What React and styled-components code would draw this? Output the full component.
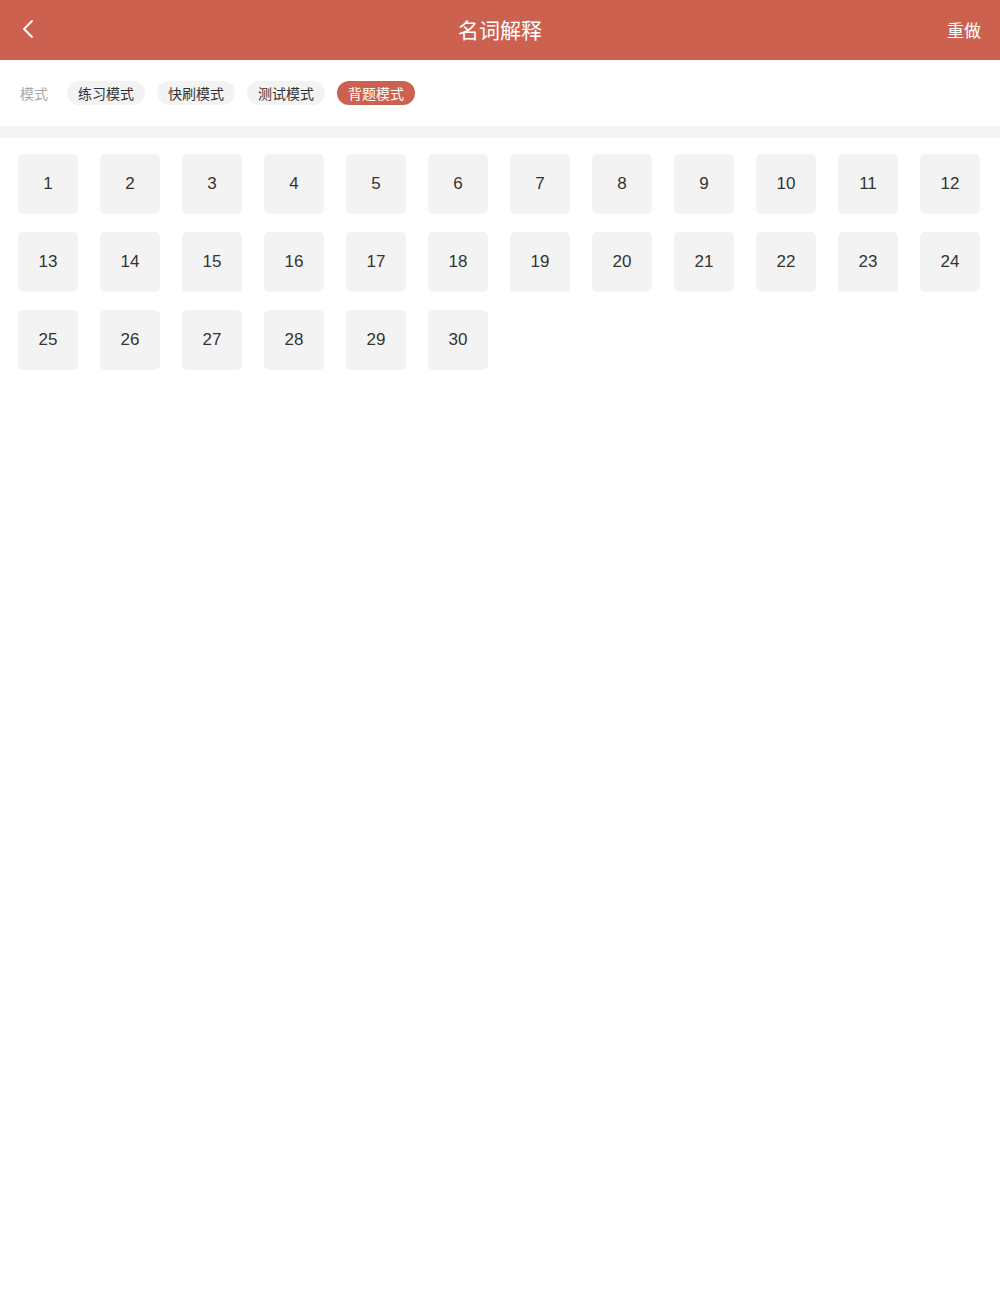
import React from "react";
import styled, { createGlobalStyle } from "styled-components";

const GlobalStyle = createGlobalStyle`
  html, body {
    margin: 0;
    padding: 0;
    background: #ffffff;
    font-family: "Noto Sans CJK SC", "Noto Sans", sans-serif;
  }
`;

const Page = styled.div`
  width: 1000px;
  min-height: 1309px;
  background: #ffffff;
`;

const Header = styled.div`
  height: 60px;
  background: #cc6150;
  display: flex;
  align-items: center;
  justify-content: space-between;
  padding: 0 19px 2px 22px;
  box-sizing: border-box;
  position: relative;
`;

const Back = styled.div`
  width: 30px;
  height: 30px;
  display: flex;
  align-items: center;
`;

const Title = styled.div`
  position: absolute;
  left: 0;
  right: 0;
  top: 0;
  height: 58px;
  line-height: 58px;
  text-align: center;
  color: #fff;
  font-size: 21px;
  pointer-events: none;
`;

const Redo = styled.div`
  color: #fff;
  font-size: 17px;
`;

const ModeBar = styled.div`
  height: 66px;
  display: flex;
  align-items: center;
  padding: 0 20px;
  gap: 12px;
`;

const ModeLabel = styled.span`
  font-size: 14px;
  color: #a8a8a8;
  margin-right: 7px;
`;

const Pill = styled.span`
  height: 24px;
  line-height: 24px;
  padding: 0 11px;
  border-radius: 12px;
  font-size: 14px;
  background: ${(p) => (p.active ? "#cc6150" : "#f3f3f3")};
  color: ${(p) => (p.active ? "#fff" : "#333")};
`;

const Divider = styled.div`
  height: 12px;
  background: #f4f4f4;
`;

const Grid = styled.div`
  display: grid;
  grid-template-columns: repeat(12, 60px);
  column-gap: 22px;
  row-gap: 18px;
  padding: 16px 18px;
`;

const Cell = styled.div`
  width: 60px;
  height: 60px;
  border-radius: 5px;
  background: #f3f3f3;
  display: flex;
  align-items: center;
  justify-content: center;
  padding-bottom: 1px;
  box-sizing: border-box;
  font-family: "Liberation Sans", Arial, sans-serif;
  font-size: 17px;
  color: #333;
`;

const modes = ["练习模式", "快刷模式", "测试模式", "背题模式"];

export default function App() {
  return (
    <Page>
      <GlobalStyle />
      <Header>
        <Back>
          <svg width="12" height="20" viewBox="0 0 12 20">
            <path d="M10 2 L2 10 L10 18" fill="none" stroke="#fff" strokeWidth="1.8" strokeLinecap="round" strokeLinejoin="round" />
          </svg>
        </Back>
        <Title>名词解释</Title>
        <Redo>重做</Redo>
      </Header>
      <ModeBar>
        <ModeLabel>模式</ModeLabel>
        {modes.map((m, i) => (
          <Pill key={m} active={i === 3}>{m}</Pill>
        ))}
      </ModeBar>
      <Divider />
      <Grid>
        {Array.from({ length: 30 }, (_, i) => (
          <Cell key={i}>{i + 1}</Cell>
        ))}
      </Grid>
    </Page>
  );
}
